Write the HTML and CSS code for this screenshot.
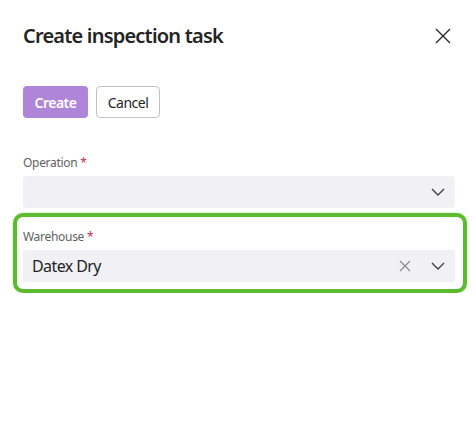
FILE: index.html
```html
<!DOCTYPE html>
<html lang="en">
<head>
    <meta charset="UTF-8">
    <meta name="viewport" content="width=device-width, initial-scale=1.0">
    <title>Create inspection task</title>
    <link rel="stylesheet" href="styles.css">
</head>
<body>
    <div class="dialog">
        <div class="dialog-header">
            <h1>Create inspection task</h1>
            <button class="close-button" aria-label="Close">
                <svg width="16" height="16" viewBox="0 0 16 16">
                    <path d="M1 1 L15 15 M15 1 L1 15" stroke="#242424" stroke-width="1.3" fill="none"/>
                </svg>
            </button>
        </div>
        <div class="actions">
            <button class="btn btn-primary">Create</button>
            <button class="btn btn-secondary">Cancel</button>
        </div>
        <div class="field">
            <label>Operation <span class="required">*</span></label>
            <div class="select">
                <span class="select-value"></span>
                <svg class="chevron" width="14" height="8" viewBox="0 0 14 8">
                    <path d="M1 1 L7 7 L13 1" stroke="#424242" stroke-width="1.4" fill="none"/>
                </svg>
            </div>
        </div>
        <div class="highlight">
            <div class="field">
                <label>Warehouse <span class="required">*</span></label>
                <div class="select">
                    <span class="select-value">Datex Dry</span>
                    <svg class="clear" width="12" height="12" viewBox="0 0 12 12">
                        <path d="M1 1 L11 11 M11 1 L1 11" stroke="#8a8a8a" stroke-width="1.1" fill="none"/>
                    </svg>
                    <svg class="chevron" width="14" height="8" viewBox="0 0 14 8">
                        <path d="M1 1 L7 7 L13 1" stroke="#424242" stroke-width="1.4" fill="none"/>
                    </svg>
                </div>
            </div>
        </div>
    </div>
</body>
</html>
```

FILE: styles.css
```css
body {
    font-family: "Noto Sans", "Open Sans", sans-serif;
    background-color: #fff;
    color: #242424;
    margin: 0;
}
.dialog {
    padding: 22px 21px 0 23px;
}
.dialog-header {
    display: flex;
    justify-content: space-between;
    align-items: flex-start;
}
h1 {
    font-size: 20px;
    font-weight: 600;
    line-height: 28px;
    letter-spacing: -0.8px;
    margin: 0;
}
.close-button {
    background: none;
    border: none;
    padding: 0;
    margin: 6px 4px 0 0;
    width: 16px;
    height: 16px;
    cursor: pointer;
}
.actions {
    display: flex;
    gap: 8px;
    margin-top: 36px;
    margin-bottom: 37px;
}
.btn {
    font-family: inherit;
    font-size: 14px;
    letter-spacing: -0.5px;
    height: 32px;
    padding: 0 8px;
    border-radius: 4px;
    cursor: pointer;
}
.btn-primary {
    background-color: #ae85d8;
    color: #fff;
    font-weight: 600;
    border: none;
    width: 65px;
}
.btn-secondary {
    background-color: #fff;
    color: #242424;
    border: 1px solid #c2c2c2;
    width: 64px;
}
.field {
    display: flex;
    flex-direction: column;
    gap: 5px;
}
label {
    font-size: 12px;
    line-height: 16px;
    letter-spacing: -0.3px;
    color: #616161;
}
.required {
    color: #c4314b;
}
.select {
    display: flex;
    align-items: center;
    height: 32px;
    background-color: #f0f0f5;
    border-radius: 4px;
    padding: 0 10px 0 9px;
}
.select-value {
    flex: 1;
    font-size: 16px;
    letter-spacing: -0.6px;
    color: #242424;
}
.clear {
    margin-right: 20px;
}
.highlight {
    margin: 5px -12px 0 -10px;
    border: 4px solid #5dbb2e;
    border-radius: 10px;
    padding: 12px 8px 7px 6px;
    box-shadow: 0 0 2px rgba(93, 187, 46, 0.6);
}
```
